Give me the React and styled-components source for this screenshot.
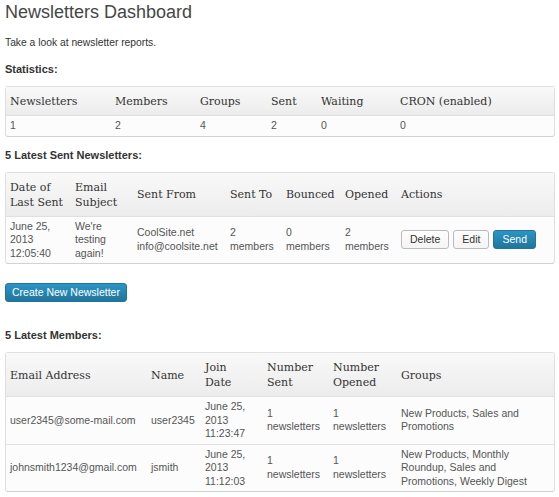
import React from 'react';
import styled, {createGlobalStyle} from 'styled-components';

const GlobalStyle = createGlobalStyle`
  body {
    margin: 0;
    background: #fff;
    font-family: "Liberation Sans", Arial, sans-serif;
    color: #333;
  }
`;

const Page = styled.div`
  padding: 0 4px 0 5px;
`;

const Title = styled.h2`
  margin: 0;
  font-size: 18px;
  line-height: 24px;
  font-weight: normal;
  color: #464646;
`;

const Intro = styled.p`
  margin: 12px 0 0;
  font-size: 10.3px;
  line-height: 14px;
  color: #333;
`;

const Heading = styled.h3`
  margin: ${p => p.$top}px 0 10px;
  font-size: 11px;
  line-height: 14px;
  font-weight: bold;
  color: #333;
`;

const Table = styled.table`
  width: 550px;
  table-layout: fixed;
  border-collapse: separate;
  border-spacing: 0;
  border: 1px solid #dfdfdf;
  border-bottom-color: #d2d2d2;
  border-radius: 3px;
  background: #fcfcfc;
`;

const Th = styled.th`
  padding: 7px 4px 6px;
  text-align: left;
  vertical-align: middle;
  white-space: pre-line;
  font-family: "DejaVu Serif", Georgia, serif;
  font-size: 11px;
  line-height: 15px;
  font-weight: normal;
  color: #333;
  background: linear-gradient(to bottom, #f9f9f9, #ececec);
  border-bottom: 1px solid #dfdfdf;
`;

const Td = styled.td`
  padding: 2px 4px 3px;
  vertical-align: middle;
  font-size: 10.5px;
  line-height: 13.5px;
  color: #555;
  border-top: 1px solid #fff;
  tr:not(:last-child) > & {
    border-bottom: 1px solid #dfdfdf;
  }
`;

const Actions = styled.div`
  display: flex;
  gap: 4px;
`;

const Button = styled.button`
  box-sizing: border-box;
  height: 19px;
  padding: 0 ${p => p.$pad || 8}px;
  font-family: "Liberation Sans", Arial, sans-serif;
  font-size: 10.5px;
  line-height: 17px;
  border-radius: 3px;
  cursor: pointer;
  color: ${p => (p.$primary ? '#fff' : '#333')};
  border: 1px solid ${p => (p.$primary ? '#21759b' : '#bbb')};
  background: ${p => (p.$primary
    ? 'linear-gradient(to bottom, #2a95c5, #21759b)'
    : 'linear-gradient(to bottom, #fefefe, #f4f4f4)')};
`;

const CreateRow = styled.div`
  margin-top: 18px;
`;

const stats = [
    ['Newsletters', 105, '1'],
    ['Members', 85, '2'],
    ['Groups', 71, '4'],
    ['Sent', 50, '2'],
    ['Waiting', 79, '0'],
    ['CRON (enabled)', 158, '0'],
];

const sentCols = [
    ['Date of\nLast Sent', 65],
    ['Email\nSubject', 62],
    ['Sent From', 93],
    ['Sent To', 56],
    ['Bounced', 59],
    ['Opened', 56],
    ['Actions', 157],
];

const memberCols = [
    ['Email Address', 141],
    ['Name', 54],
    ['Join\nDate', 62],
    ['Number\nSent', 66],
    ['Number\nOpened', 68],
    ['Groups', 157],
];

const members = [
    {
        email: 'user2345@some-mail.com',
        name: 'user2345',
        joined: '11:23:47',
        groups: 'New Products, Sales and Promotions',
    },
    {
        email: 'johnsmith1234@gmail.com',
        name: 'jsmith',
        joined: '11:12:03',
        groups: 'New Products, Monthly Roundup, Sales and Promotions, Weekly Digest',
    },
];

const Cols = ({cols}) => (
    <colgroup>
        {cols.map(([label, w]) => <col key={label} style={{width: w}}/>)}
    </colgroup>
);

const App = () => (
    <Page>
        <GlobalStyle/>
        <Title>Newsletters Dashboard</Title>
        <Intro>Take a look at newsletter reports.</Intro>

        <Heading $top={12}>Statistics:</Heading>
        <Table>
            <Cols cols={stats}/>
            <thead>
            <tr>{stats.map(([label]) => <Th key={label}>{label}</Th>)}</tr>
            </thead>
            <tbody>
            <tr>{stats.map(([label, , value]) => <Td key={label}>{value}</Td>)}</tr>
            </tbody>
        </Table>

        <Heading $top={11}>5 Latest Sent Newsletters:</Heading>
        <Table>
            <Cols cols={sentCols}/>
            <thead>
            <tr>{sentCols.map(([label]) => <Th key={label}>{label}</Th>)}</tr>
            </thead>
            <tbody>
            <tr>
                <Td>June 25,<br/>2013<br/>12:05:40</Td>
                <Td>We're<br/>testing<br/>again!</Td>
                <Td>CoolSite.net<br/>info@coolsite.net</Td>
                <Td>2<br/>members</Td>
                <Td>0<br/>members</Td>
                <Td>2<br/>members</Td>
                <Td>
                    <Actions>
                        <Button>Delete</Button>
                        <Button>Edit</Button>
                        <Button $primary>Send</Button>
                    </Actions>
                </Td>
            </tr>
            </tbody>
        </Table>

        <CreateRow>
            <Button $primary $pad={6}>Create New Newsletter</Button>
        </CreateRow>

        <Heading $top={26}>5 Latest Members:</Heading>
        <Table>
            <Cols cols={memberCols}/>
            <thead>
            <tr>{memberCols.map(([label]) => <Th key={label}>{label}</Th>)}</tr>
            </thead>
            <tbody>
            {members.map(m => (
                <tr key={m.email}>
                    <Td>{m.email}</Td>
                    <Td>{m.name}</Td>
                    <Td>June 25,<br/>2013<br/>{m.joined}</Td>
                    <Td>1<br/>newsletters</Td>
                    <Td>1<br/>newsletters</Td>
                    <Td>{m.groups}</Td>
                </tr>
            ))}
            </tbody>
        </Table>
    </Page>
);

export default App;
